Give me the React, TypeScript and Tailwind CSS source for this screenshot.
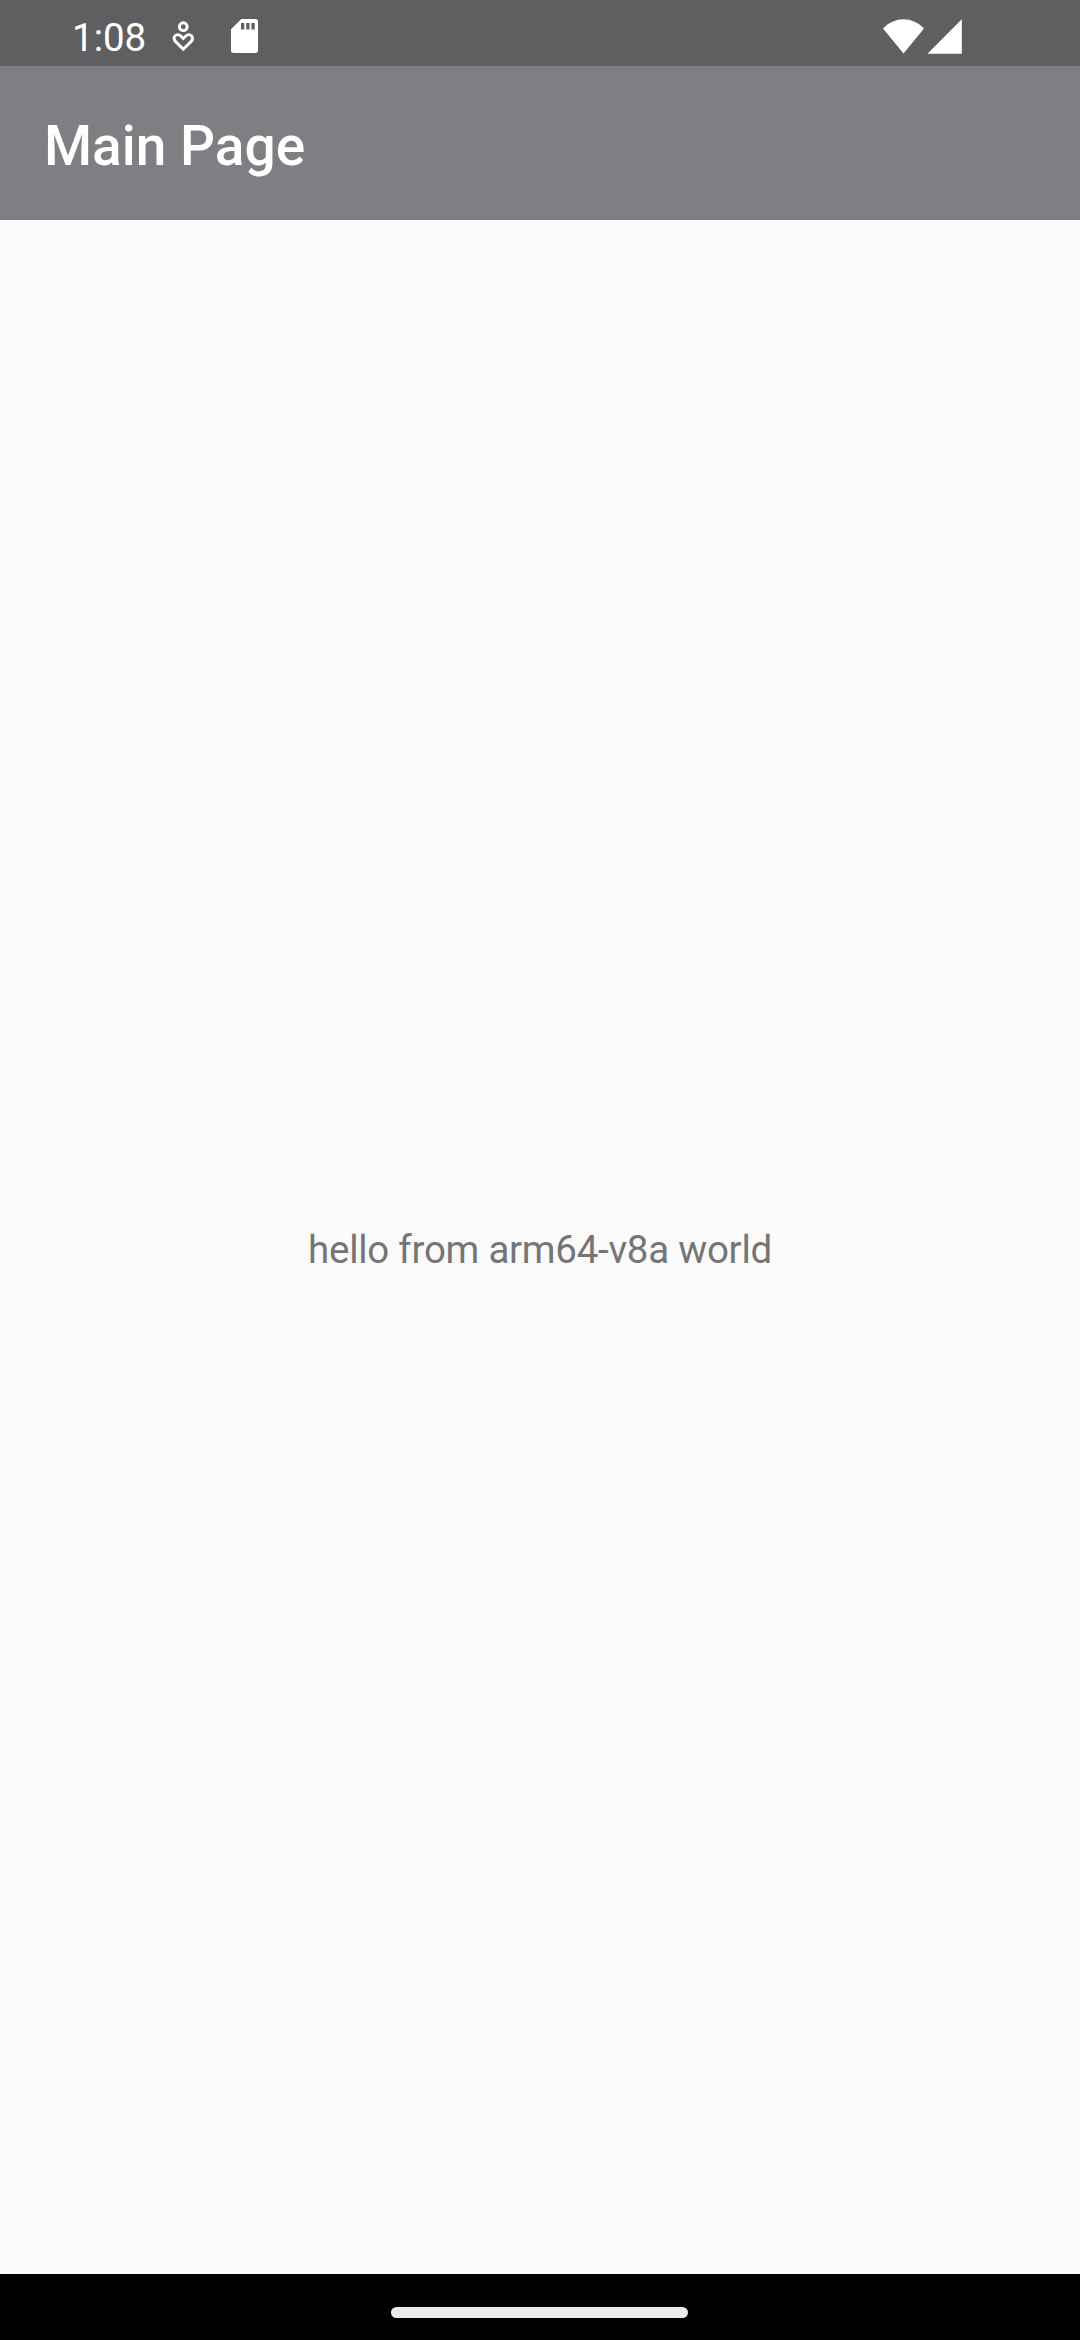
function PersonHeartIcon() {
  return (
    <svg className="h-[66px] w-6 shrink-0" viewBox="171 0 24 66" fill="none" stroke="#fff" strokeWidth="2.9">
      <circle cx="183.3" cy="26.7" r="3.9" />
      <path d="M183.3 49.2l-7.9-7.8c-1.7-1.7-1.7-4.1-.3-5.6 1.5-1.5 3.9-1.5 5.4 0l2.8 2.7 2.8-2.7c1.5-1.5 3.9-1.5 5.4 0 1.4 1.5 1.4 3.9-.3 5.6z" />
    </svg>
  );
}

function SdCardIcon() {
  return (
    <svg className="h-[66px] w-7 shrink-0" viewBox="231 0 28 66">
      <path
        fill="#fff"
        fillRule="evenodd"
        d="M241.3 19h13.9a2.8 2.8 0 0 1 2.800 2.800v28.400a2.800 2.800 0 0 1-2.800 2.800h-21.400a2.800 2.800 0 0 1-2.800-2.800V29.300zM241 23v6.500h3.300V23zm5.200 0v6.500h3.300V23zm5.200 0v6.500h3.300V23z"
      />
    </svg>
  );
}

function WifiIcon() {
  return (
    <svg className="h-[66px] w-[42px]" viewBox="883 0 42 66">
      <path fill="#fff" d="M903.5 53.6L883 28.4C888.6 22.6 895.8 19.2 903.5 19.2S918.4 22.6 924 28.4z" />
    </svg>
  );
}

function SignalIcon() {
  return (
    <svg className="h-[66px] w-[35px]" viewBox="927 0 35 66">
      <path fill="#fff" d="M927.4 53.7L961.8 19.3V53.7z" />
    </svg>
  );
}

export default function App() {
  return (
    <div className="flex h-[2340px] w-[1080px] flex-col overflow-hidden bg-[#fafafa] font-['Roboto',sans-serif]">
      <div className="flex h-[66px] shrink-0 items-center justify-between bg-[#5f5f61] pr-[118px] pl-[72px] text-white">
        <div className="flex h-full items-center">
          <span className="w-[99px] pt-2.5 text-[38.5px] leading-[44px]">1:08</span>
          <PersonHeartIcon />
          <div className="ml-9 flex">
            <SdCardIcon />
          </div>
        </div>
        <div className="flex">
          <WifiIcon />
          <div className="ml-0.5">
            <SignalIcon />
          </div>
        </div>
      </div>
      <header className="flex h-[154px] shrink-0 items-center bg-[#7f7e82] pt-1.5 pl-11">
        <h1 className="text-[55px] leading-[64px] font-medium text-white">Main Page</h1>
      </header>
      <main className="flex flex-1 items-center justify-center pt-[5px]">
        <p className="text-[38.5px] leading-[52px] tracking-[-0.26px] text-[#757575]">hello from arm64-v8a world</p>
      </main>
      <nav className="flex h-[66px] shrink-0 justify-center bg-black pt-[33px]">
        <div className="mr-px h-[11px] w-[297px] rounded-full bg-[#ebebeb]" />
      </nav>
    </div>
  );
}
